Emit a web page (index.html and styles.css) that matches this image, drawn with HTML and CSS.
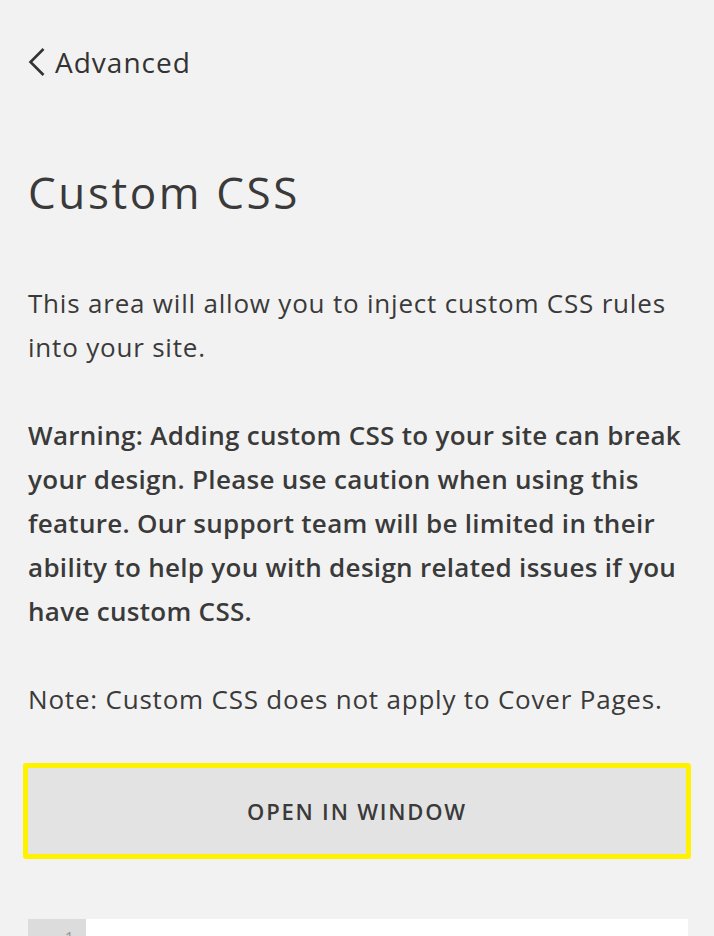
FILE: index.html
```html
<!DOCTYPE html>
<html lang="en">
<head>
    <meta charset="UTF-8">
    <title>Custom CSS</title>
    <link rel="stylesheet" href="styles.css">
</head>
<body>
    <div class="panel">
        <!-- back link -->
        <a class="back" href="#">
            <svg class="back-icon" width="17" height="30" viewBox="0 0 17 30">
                <polyline points="15.5,2 2.5,15 15.5,28" fill="none" stroke="#333" stroke-width="2.6"/>
            </svg>
            <span>Advanced</span>
        </a>

        <h1 class="title">Custom CSS</h1>

        <p class="text">This area will allow you to inject custom CSS rules into your site.</p>
        <p class="text warning">Warning: Adding custom CSS to your site can break your design. Please use caution when using this feature. Our support team will be limited in their ability to help you with design related issues if you have custom CSS.</p>
        <p class="text">Note: Custom CSS does not apply to Cover Pages.</p>

        <button class="open-btn">OPEN IN WINDOW</button>

        <!-- code editor -->
        <div class="editor">
            <div class="gutter"><span class="line-no">1</span></div>
            <div class="code"></div>
        </div>
    </div>
</body>
</html>
```

FILE: styles.css
```css
* {
    margin: 0;
    padding: 0;
    box-sizing: border-box;
}

body {
    background: #f2f2f2;
    font-family: 'Open Sans', 'Lato', sans-serif;
    color: #3a3a3a;
    overflow: hidden;
}

.panel {
    padding: 44px 26px 0 28px;
}

.back {
    display: flex;
    align-items: center;
    gap: 10px;
    height: 36px;
    color: #333;
    text-decoration: none;
    font-size: 28px;
    letter-spacing: 1px;
}

.title {
    margin-top: 87px;
    font-size: 44px;
    line-height: 50px;
    font-weight: 400;
    letter-spacing: 2.6px;
    color: #3a3a3a;
}

.text {
    margin-top: 44px;
    font-size: 26px;
    line-height: 44px;
    letter-spacing: 0.8px;
}

.title + .text {
    margin-top: 64px;
}

.warning {
    font-weight: 600;
    letter-spacing: 0.3px;
}

.open-btn {
    display: block;
    width: calc(100% + 8px);
    margin: 42px -3px 0 -5px;
    height: 96px;
    background: #e3e3e3;
    border: 5px solid #fff200;
    border-radius: 3px;
    font-family: inherit;
    font-size: 22px;
    font-weight: 600;
    letter-spacing: 1.8px;
    color: #3a3a3a;
}

.editor {
    display: flex;
    margin-top: 60px;
    height: 200px;
    background: #fff;
}

.gutter {
    width: 58px;
    background: #dcdcdc;
    text-align: right;
    padding: 8px 12px 0 0;
    font-size: 16px;
    color: #999;
}

.code {
    flex: 1;
}
```
